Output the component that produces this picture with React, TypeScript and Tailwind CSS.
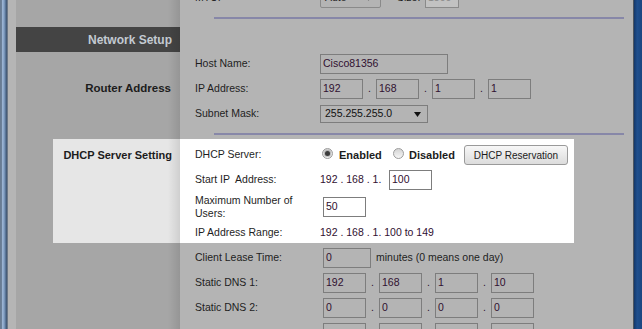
import React from "react";

function Field({ className = "", children }: { className?: string; children?: React.ReactNode }) {
  return (
    <div
      className={
        "h-[20px] shrink-0 border border-[#7d7d7d] flex items-center pl-[2px] text-[10.5px] text-[#301030] " +
        className
      }
    >
      {children}
    </div>
  );
}

function Dot() {
  return <span className="w-[13px] shrink-0 text-center text-[10.5px] text-[#301030]">.</span>;
}

function Quad({ vals, className = "", boxClass = "" }: { vals: string[]; className?: string; boxClass?: string }) {
  return (
    <div className={"flex items-center " + className}>
      <Field className={"w-[43px] " + boxClass}>{vals[0]}</Field>
      <Dot />
      <Field className={"w-[43px] " + boxClass}>{vals[1]}</Field>
      <Dot />
      <Field className={"w-[43px] " + boxClass}>{vals[2]}</Field>
      <Dot />
      <Field className={"w-[43px] " + boxClass}>{vals[3]}</Field>
    </div>
  );
}

function Label({ children, className = "" }: { children?: React.ReactNode; className?: string }) {
  return (
    <div className={"w-[140px] shrink-0 pl-[15px] text-[10.5px] text-[#1e1e1e] whitespace-pre " + className}>
      {children}
    </div>
  );
}

function Radio({ checked }: { checked?: boolean }) {
  return (
    <div className="mb-[4px] w-[11px] h-[11px] shrink-0 rounded-full border border-[#9c9c9c] bg-linear-to-b from-[#d4d4d4] to-[#f6f6f6] flex items-center justify-center">
      {checked && <div className="w-[5px] h-[5px] rounded-full bg-[#3c3c3c] shadow-[0_0_1px_1px_rgba(80,80,80,0.35)]" />}
    </div>
  );
}

function Arrow({ className = "" }: { className?: string }) {
  return (
    <svg width="7" height="5" viewBox="0 0 7 5" className={className}>
      <polygon points="0,0 7,0 3.5,5" fill="currentColor" />
    </svg>
  );
}

export default function App() {
  return (
    <div className="w-[642px] h-[329px] overflow-hidden flex font-[family-name:Liberation_Sans,Arial,sans-serif] bg-[#b4b4b4]">
      {/* left window bezel */}
      <div className="w-[8px] shrink-0 bg-[linear-gradient(to_right,#687a90_0px,#6c8098_1.5px,#9ab3d2_2.5px,#86a2c6_4px,#5a7698_5.5px,#3e5068_7px,#9aa0a6_8px)]" />
      <div className="w-[8px] shrink-0 bg-[#b5b5b5]" />

      {/* sidebar */}
      <div className="w-[164px] shrink-0 bg-[#a6a6a6] relative flex flex-col">
        <div className="h-[27px] shrink-0" />
        <div className="h-[25px] shrink-0 bg-[#444444] flex items-center justify-end pr-[8px] text-[12px] font-bold text-[#c3cad2]">
          Network Setup
        </div>
        <div className="mt-[27px] h-[20px] shrink-0 flex items-center justify-end pr-[9px] text-[11.5px] font-bold text-[#1c1c1c]">
          Router Address
        </div>
        <div className="mt-[40px] ml-[37px] h-[104px] shrink-0 bg-[#e6e6e6] pt-[6px]">
          <div className="h-[20px] flex items-center justify-end pr-[8px] text-[11px] font-bold text-[#1c1c1c]">
            DHCP Server Setting
          </div>
        </div>
        <div className="absolute right-0 top-0 bottom-0 w-[12px] bg-linear-to-r from-transparent to-black/10" />
      </div>

      {/* content */}
      <div className="w-[453px] shrink-0 bg-[#b4b4b4] flex flex-col">
        {/* MTU row (cut) */}
        <div className="mt-[-12px] h-[20px] shrink-0 flex items-center">
          <Label>MTU:</Label>
          <div className="w-[61px] h-[20px] border border-[#8a8a8a] rounded-[2px] flex items-center pl-[4px] text-[10.5px] text-[#222]">
            Auto
            <Arrow className="ml-auto mr-[8px] text-[#777]" />
          </div>
          <span className="ml-[16px] w-[28px] text-[10.5px] text-[#1e1e1e]">Size:</span>
          <div className="w-[34px] h-[20px] border border-[#8a8a8a] bg-[#c2c2c2] flex items-center pl-[2px] text-[10.5px] text-[#8a8a8a]">
            1500
          </div>
        </div>
        <div className="mt-[9px] h-[2px] ml-[34px] w-[410px] shrink-0 bg-[#8787a8]" />

        {/* Router address */}
        <div className="mt-[35px] h-[20px] shrink-0 flex items-center">
          <Label>Host Name:</Label>
          <Field className="w-[128px]">Cisco81356</Field>
        </div>
        <div className="mt-[5px] h-[20px] shrink-0 flex items-center">
          <Label>IP Address:</Label>
          <Quad vals={["192", "168", "1", "1"]} />
        </div>
        <div className="mt-[6px] h-[18px] shrink-0 flex items-center">
          <Label>Subnet Mask:</Label>
          <div className="w-[108px] h-[18px] border border-[#7d7d7d] flex items-center pl-[4px] text-[10.5px] text-[#111]">
            255.255.255.0
            <Arrow className="ml-auto mr-[6px] text-[#111]" />
          </div>
        </div>
        <div className="mt-[10px] h-[2px] ml-[34px] w-[410px] shrink-0 bg-[#8787a8]" />

        {/* DHCP highlight */}
        <div className="mt-[4px] w-[394px] h-[104px] shrink-0 bg-white flex flex-col pt-[6px]">
          <div className="h-[20px] shrink-0 flex items-center">
            <Label>DHCP Server:</Label>
            <div className="ml-[2px] flex items-center">
              <Radio checked />
              <span className="ml-[6px] w-[54px] text-[11px] font-bold text-[#1c1c1c]">Enabled</span>
              <Radio />
              <span className="ml-[5px] w-[55px] text-[11px] font-bold text-[#1c1c1c]">Disabled</span>
              <div className="w-[104px] h-[20px] rounded-[3px] border border-[#9a9a9a] bg-linear-to-b from-[#f7f7f7] to-[#dcdcdc] flex items-center justify-center text-[10px] text-[#1c1c1c]">
                DHCP Reservation
              </div>
            </div>
          </div>
          <div className="mt-[5px] h-[20px] shrink-0 flex items-center">
            <Label>Start IP  Address:</Label>
            <span className="w-[69px] text-[10.5px] text-[#301030]">192 . 168 . 1.</span>
            <Field className="w-[43px]">100</Field>
          </div>
          <div className="mt-[4px] h-[26px] shrink-0 flex items-center">
            <Label className="leading-[13px] whitespace-normal">
              Maximum Number of
              <br />
              Users:
            </Label>
            <Field className="ml-[3px] w-[43px]">50</Field>
          </div>
          <div className="mt-[6px] h-[14px] shrink-0 flex items-center">
            <Label>IP Address Range:</Label>
            <span className="text-[10.5px] text-[#301030]">192 . 168 . 1. 100 to 149</span>
          </div>
        </div>

        {/* lease / DNS */}
        <div className="mt-[5px] h-[20px] shrink-0 flex items-center">
          <Label>Client Lease Time:</Label>
          <Field className="ml-[3px] w-[48px]">0</Field>
          <span className="ml-[5px] text-[10.5px] text-[#1e1e1e]">minutes (0 means one day)</span>
        </div>
        <div className="mt-[5px] h-[20px] shrink-0 flex items-center">
          <Label>Static DNS 1:</Label>
          <Quad className="ml-[3px]" vals={["192", "168", "1", "10"]} />
        </div>
        <div className="mt-[5px] h-[20px] shrink-0 flex items-center">
          <Label>Static DNS 2:</Label>
          <Quad className="ml-[3px]" vals={["0", "0", "0", "0"]} />
        </div>
        <div className="mt-[5px] h-[20px] shrink-0 flex items-center">
          <Label />
          <Quad className="ml-[3px]" vals={["", "", "", ""]} />
        </div>
      </div>

      {/* right window bezel */}
      <div className="w-[1px] shrink-0 bg-[#4e5660]" />
      <div className="flex-1 bg-[linear-gradient(to_right,#14386a,#1f4f8e_40%,#1a4680)]" />
    </div>
  );
}
